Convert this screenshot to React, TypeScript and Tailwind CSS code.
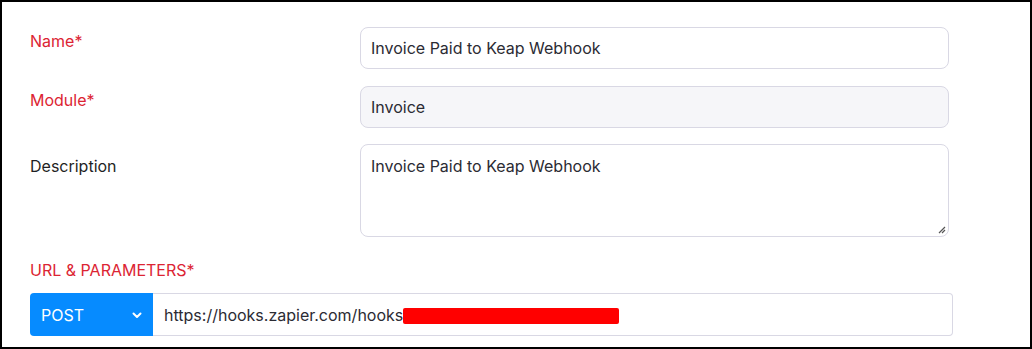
import React from "react";

const labelRed = "text-[16px] text-[#dc2433] leading-5";

const App = () => {
  return (
    <div className="w-[1032px] h-[349px] bg-white border-2 border-black font-['Inter','Noto_Sans',sans-serif] overflow-hidden">
      <div className="pl-[28px] pt-[25px] flex flex-col">
        {/* Name */}
        <div className="flex">
          <div className={`w-[330px] pt-[4px] ${labelRed}`}>Name*</div>
          <div className="w-[589px] h-[42px] rounded-lg border border-[#d9d8e4] bg-white px-[10px] flex items-center text-[16px] text-[#2b2b33]">
            Invoice Paid to Keap Webhook
          </div>
        </div>

        {/* Module */}
        <div className="flex mt-[17px]">
          <div className={`w-[330px] pt-[4px] ${labelRed}`}>Module*</div>
          <div className="w-[589px] h-[42px] rounded-lg border border-[#d9d8e4] bg-[#f6f6f9] px-[10px] flex items-center text-[16px] text-[#2b2b33]">
            Invoice
          </div>
        </div>

        {/* Description */}
        <div className="flex mt-[16px]">
          <div className="w-[330px] pt-[12px] text-[16px] leading-5 text-[#1f1f24]">Description</div>
          <div className="relative w-[589px] h-[93px] rounded-lg border border-[#d9d8e4] bg-white px-[10px] pt-[11px] text-[16px] leading-5 text-[#2b2b33]">
            Invoice Paid to Keap Webhook
            <svg className="absolute right-[2px] bottom-[2px]" width="9" height="9" viewBox="0 0 9 9">
              <path d="M8 2 L2 8 M8 5 L5 8" stroke="#555" strokeWidth="1.2" />
            </svg>
          </div>
        </div>

        {/* URL */}
        <div className={`mt-[23px] ${labelRed}`}>URL &amp; PARAMETERS*</div>
        <div className="flex mt-[13px] h-[43px]">
          <div className="w-[123px] bg-[#068bff] rounded-l-[4px] flex items-center justify-between pl-[11px] pr-[10px] text-white text-[16px]">
            <span>POST</span>
            <svg width="12" height="12" viewBox="0 0 12 12">
              <path d="M2.5 4.5 L6 8 L9.5 4.5" stroke="white" strokeWidth="2" fill="none" strokeLinecap="round" strokeLinejoin="round" />
            </svg>
          </div>
          <div className="w-[800px] border border-l-0 border-[#d9d8e4] rounded-r-[4px] bg-white flex items-center pl-[11px] text-[16px] text-[#2b2b33]">
            <span>https://hooks.zapier.com/hooks</span>
            <span className="inline-block w-[216px] h-[16px] mt-[2px] bg-[#ff0000] rounded-[2px]" />
          </div>
        </div>
      </div>
    </div>
  );
};

export default App;
